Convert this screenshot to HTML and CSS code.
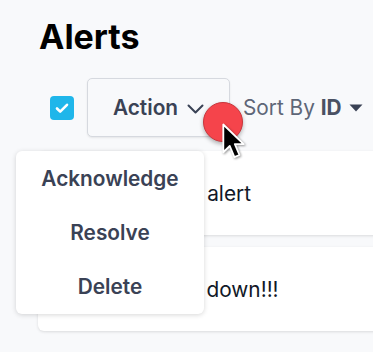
FILE: index.html
```html
<!DOCTYPE html>
<html>
<head>
<meta charset="utf-8">
<link rel="stylesheet" href="styles.css">
</head>
<body>
<div class="page">
  <h1 class="title">Alerts</h1>
  <div class="toolbar">
    <span class="check">
      <svg width="24" height="24" viewBox="0 0 24 24"><path d="M7 12.5l3.2 3.2L17 8.8" fill="none" stroke="#fff" stroke-width="2.6" stroke-linecap="round" stroke-linejoin="round"/></svg>
    </span>
    <button class="action">Action
      <svg class="chev" width="17" height="10" viewBox="0 0 17 10"><path d="M1.5 1.5l7 7 7-7" fill="none" stroke="#3a4255" stroke-width="2" stroke-linecap="round" stroke-linejoin="round"/></svg>
    </button>
    <span class="sort">Sort By <b>ID</b>
      <svg class="caret" width="14" height="8" viewBox="0 0 14 8"><path d="M0.5 0.5h13L7 7.5z" fill="#3a4255"/></svg>
    </span>
  </div>
  <div class="cards">
    <div class="card">High CPU load alert</div>
    <div class="card">Email server is down!!!</div>
  </div>
  <div class="menu">
    <div class="item">Acknowledge</div>
    <div class="item">Resolve</div>
    <div class="item">Delete</div>
  </div>
  <div class="dot"></div>
  <svg class="cursor" width="30" height="42" viewBox="0 0 26 36"><path d="M2 2 L2 26 L7.6 20.6 L11.6 30.2 L16 28.4 L12 19 L19.6 19 Z" fill="#000" stroke="#fff" stroke-width="1.6" stroke-linejoin="round"/></svg>
</div>
</body>
</html>
```
FILE: styles.css
```css
html, body {
  margin: 0;
  padding: 0;
  background: #f8f9fb;
  overflow: hidden;
}
.page {
  position: relative;
  width: 373px;
  height: 352px;
  overflow: hidden;
  font-family: Inter, "Noto Sans", sans-serif;
}
.title {
  margin: 0;
  padding: 17px 0 0 39px;
  font-size: 34px;
  line-height: 40px;
  font-weight: 700;
  color: #000;
}
.toolbar {
  display: flex;
  align-items: center;
  margin-top: 21px;
  padding-left: 50px;
  height: 59px;
}
.check {
  width: 24px;
  height: 24px;
  border-radius: 4px;
  background: #1fb6ea;
  display: flex;
}
.action {
  margin-left: 13px;
  width: 143px;
  height: 59px;
  border: 1px solid #d6d9df;
  border-radius: 5px;
  background: #f8f9fb;
  box-shadow: 0 1px 2px rgba(0,0,0,0.08);
  display: flex;
  align-items: center;
  justify-content: center;
  gap: 9px;
  font-family: Inter, sans-serif;
  font-size: 20.8px;
  font-weight: 600;
  color: #3a4255;
  padding: 0;
}
.chev { margin-top: 2px; }
.sort {
  margin-left: 13px;
  display: flex;
  align-items: center;
  font-size: 20.8px;
  color: #5e6677;
  white-space: pre;
}
.sort b { font-weight: 700; color: #4a5163; }
.caret { margin-left: 7px; margin-top: 1px; }
.cards {
  display: flex;
  flex-direction: column;
  gap: 12px;
  margin-top: 14px;
  margin-right: -20px;
  padding-left: 38px;
}
.card {
  height: 84px;
  background: #fff;
  border-radius: 6px;
  box-shadow: 0 1px 3px rgba(0,0,0,0.12);
  display: flex;
  align-items: center;
  padding-left: 20px;
  font-size: 20.8px;
  color: #111827;
}
.menu {
  position: absolute;
  left: 16px;
  top: 151px;
  width: 188px;
  padding-top: 1px;
  background: #fff;
  border-radius: 6px;
  box-shadow: 0 1px 5px rgba(0,0,0,0.16);
  display: flex;
  flex-direction: column;
}
.item {
  height: 54px;
  line-height: 54px;
  text-align: center;
  font-size: 20.8px;
  font-weight: 600;
  color: #3a4255;
}
.dot {
  position: absolute;
  left: 203px;
  top: 102px;
  width: 38px;
  height: 38px;
  border-radius: 50%;
  background: #f5444b;
  border: 1px solid #c8353b;
  box-shadow: 0 2px 4px rgba(0,0,0,0.3);
}
.cursor {
  position: absolute;
  left: 221px;
  top: 122px;
  filter: drop-shadow(1px 1px 1px rgba(0,0,0,0.4));
}
```
